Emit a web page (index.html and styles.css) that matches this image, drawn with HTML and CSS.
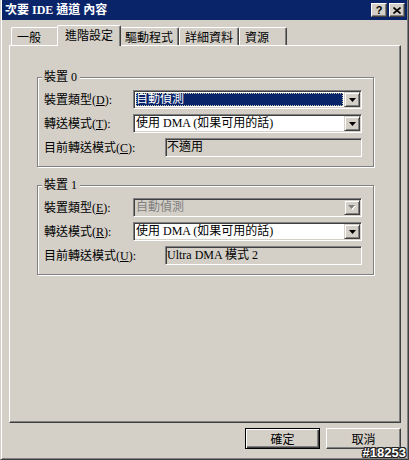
FILE: index.html
```html
<!DOCTYPE html>
<html lang="zh-Hant">
<head>
    <meta charset="UTF-8">
    <title>次要 IDE 通道 內容</title>
    <link rel="stylesheet" href="styles.css">
</head>
<body>
<div class="window">
    <div class="titlebar">
        <span class="title">次要 IDE 通道 內容</span>
        <div class="title-btns">
            <span class="tbtn help">?</span>
            <span class="tbtn">
                <svg width="8" height="7" viewBox="0 0 8 7"><path d="M0.5 0.5 L7.5 6.5 M7.5 0.5 L0.5 6.5" stroke="#000" stroke-width="1.6" fill="none"/></svg>
            </span>
        </div>
    </div>

    <div class="tabs">
        <div class="tab narrow">一般</div>
        <div class="tab active">進階設定</div>
        <div class="tab">驅動程式</div>
        <div class="tab">詳細資料</div>
        <div class="tab narrow">資源</div>
    </div>

    <div class="panel">
        <div class="group">
            <span class="legend">裝置 0</span>
            <div class="row">
                <label>裝置類型(<u>D</u>):</label>
                <div class="combo">
                    <span class="value selected">自動偵測</span>
                    <span class="drop"><svg width="7" height="4" viewBox="0 0 7 4"><path d="M0 0 H7 L3.5 4 Z" fill="#000"/></svg></span>
                </div>
            </div>
            <div class="row">
                <label>轉送模式(<u>T</u>):</label>
                <div class="combo">
                    <span class="value">使用 DMA (如果可用的話)</span>
                    <span class="drop"><svg width="7" height="4" viewBox="0 0 7 4"><path d="M0 0 H7 L3.5 4 Z" fill="#000"/></svg></span>
                </div>
            </div>
            <div class="row">
                <label class="wide">目前轉送模式(<u>C</u>):</label>
                <div class="field">不適用</div>
            </div>
        </div>

        <div class="group second">
            <span class="legend">裝置 1</span>
            <div class="row">
                <label>裝置類型(<u>E</u>):</label>
                <div class="combo disabled">
                    <span class="value">自動偵測</span>
                    <span class="drop"><svg width="8" height="5" viewBox="0 0 8 5"><path d="M1 1 H8 L4.5 5 Z" fill="#fff"/><path d="M0 0 H7 L3.5 4 Z" fill="#808080"/></svg></span>
                </div>
            </div>
            <div class="row">
                <label>轉送模式(<u>R</u>):</label>
                <div class="combo">
                    <span class="value">使用 DMA (如果可用的話)</span>
                    <span class="drop"><svg width="7" height="4" viewBox="0 0 7 4"><path d="M0 0 H7 L3.5 4 Z" fill="#000"/></svg></span>
                </div>
            </div>
            <div class="row">
                <label class="wide">目前轉送模式(<u>U</u>):</label>
                <div class="field">Ultra DMA 模式 2</div>
            </div>
        </div>
    </div>

    <div class="buttons">
        <button class="default">確定</button>
        <button>取消</button>
    </div>

    <div class="stamp">#18253</div>
</div>
</body>
</html>
```

FILE: styles.css
```css
body {
    margin: 0;
    background: #d4d0c8;
    font-family: "Liberation Serif", "Noto Sans CJK TC", serif;
    font-size: 12px;
    color: #000;
}
.window {
    position: relative;
    width: 409px;
    height: 460px;
    box-sizing: border-box;
    border-style: solid;
    border-width: 0 1px 1px 1px;
    border-color: #d4d0c8 #404040 #404040 #d4d0c8;
    padding: 0 1px 1px 1px;
    box-shadow: inset 1px 0 #fff, inset -1px -1px #808080;
}
.titlebar {
    height: 20px;
    background: #0a246a;
    display: flex;
    align-items: center;
    justify-content: space-between;
    padding: 0 2px 0 3px;
}
.title {
    color: #fff;
    font-weight: bold;
    line-height: 14px;
}
.title-btns {
    display: flex;
    gap: 2px;
}
.tbtn {
    width: 16px;
    height: 14px;
    box-sizing: border-box;
    background: #d4d0c8;
    border: 1px solid;
    border-color: #fff #404040 #404040 #fff;
    box-shadow: inset -1px -1px #808080;
    display: flex;
    align-items: center;
    justify-content: center;
}
.help {
    font-family: "Liberation Sans", sans-serif;
    font-weight: bold;
    font-size: 11px;
    line-height: 12px;
}
.tabs {
    display: flex;
    align-items: flex-end;
    height: 21px;
    margin-top: 5px;
    padding-left: 9px;
}
.tab {
    width: 60px;
    height: 18px;
    margin-bottom: 1px;
    box-sizing: border-box;
    padding: 3px 0 0 5px;
    line-height: 14px;
    border-style: solid;
    border-width: 1px 1px 0 1px;
    border-color: #fff #404040 #fff #fff;
    border-radius: 2px 2px 0 0;
    box-shadow: inset -1px 0 #808080;
    background: #d4d0c8;
}
.tab.narrow {
    width: 48px;
}
.tab.active {
    position: relative;
    z-index: 1;
    width: 64px;
    height: 21px;
    margin: 0 -2px;
    padding-left: 7px;
}
.panel {
    width: 392px;
    height: 378px;
    margin: -1px 0 0 7px;
    box-sizing: border-box;
    border: 1px solid;
    border-color: #fff #404040 #404040 #fff;
    box-shadow: inset -1px -1px #808080;
    padding: 31px 0 0 27px;
}
.group {
    position: relative;
    width: 337px;
    box-sizing: border-box;
    border: 1px solid #808080;
    box-shadow: inset 1px 1px #fff, 1px 1px #fff;
    padding: 12px 11px 9px 6px;
    display: flex;
    flex-direction: column;
    gap: 5px;
}
.group.second {
    margin-top: 18px;
}
.legend {
    position: absolute;
    top: -8px;
    left: 4px;
    padding: 0 3px 0 2px;
    background: #d4d0c8;
    line-height: 14px;
}
.row {
    display: flex;
    align-items: center;
    height: 19px;
}
label {
    flex: none;
    width: 89px;
    line-height: 14px;
}
label.wide {
    width: 121px;
}
.combo, .field {
    flex: 1;
    height: 19px;
    box-sizing: border-box;
    border: 1px solid;
    border-color: #808080 #fff #fff #808080;
    box-shadow: inset 1px 1px #404040, inset -1px -1px #d4d0c8;
    padding: 1px;
}
.combo {
    display: flex;
    background: #fff;
}
.combo.disabled {
    background: #d4d0c8;
}
.value {
    flex: 1;
    padding-left: 1px;
    line-height: 15px;
    white-space: nowrap;
}
.value.selected {
    margin: 1px 1px 1px 1px;
    padding-left: 0;
    line-height: 13px;
    background: #0a246a;
    color: #fff;
    outline: 1px dotted #c8c8b0;
    outline-offset: -1px;
}
.disabled .value {
    color: #808080;
}
.drop {
    flex: none;
    width: 16px;
    box-sizing: border-box;
    background: #d4d0c8;
    border: 1px solid;
    border-color: #d4d0c8 #404040 #404040 #d4d0c8;
    box-shadow: inset 1px 1px #fff, inset -1px -1px #808080;
    display: flex;
    align-items: center;
    justify-content: center;
}
.field {
    background: #d4d0c8;
    padding: 1px 1px 1px 1px;
    line-height: 15px;
}
.buttons {
    display: flex;
    justify-content: flex-end;
    gap: 6px;
    margin-top: 5px;
    padding-right: 6px;
}
button {
    width: 75px;
    height: 21px;
    box-sizing: border-box;
    padding: 0;
    font-family: "Liberation Serif", "Noto Sans CJK TC", serif;
    font-size: 12px;
    color: #000;
    background: #d4d0c8;
    border: 1px solid;
    border-color: #fff #404040 #404040 #fff;
    box-shadow: inset -1px -1px #808080;
}
button.default {
    border-color: #000;
    box-shadow: inset 1px 1px #fff, inset -1px -1px #404040, inset -2px -2px #808080;
}
.stamp {
    position: absolute;
    right: 2px;
    bottom: 0;
    font-family: "Liberation Sans", sans-serif;
    font-weight: bold;
    font-size: 13px;
    line-height: 13px;
    color: #fff;
    text-shadow: 1px 0 #222, -1px 0 #222, 0 1px #222, 0 -1px #222, 1px 1px #222, -1px -1px #222, 1px -1px #222, -1px 1px #222;
}
```
